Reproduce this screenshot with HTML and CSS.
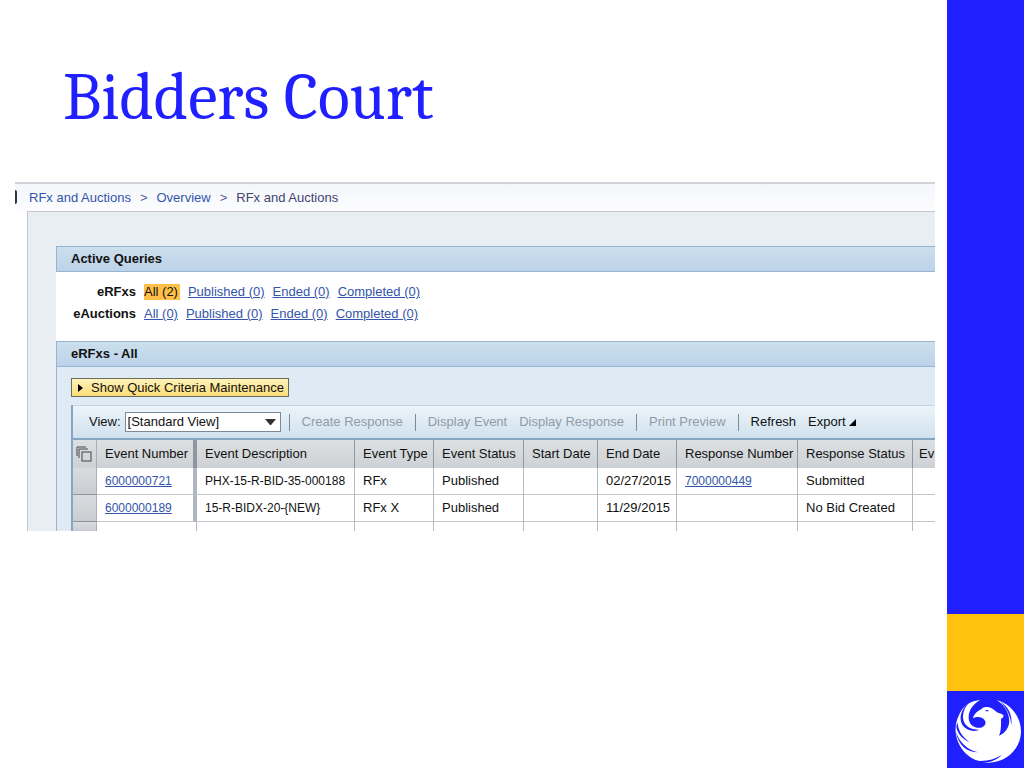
FILE: index.html
```html
<!DOCTYPE html>
<html lang="en">
<head>
    <meta charset="UTF-8">
    <meta name="viewport" content="width=device-width, initial-scale=1.0">
    <title>Bidders Court</title>
    <link rel="stylesheet" href="styles.css">
</head>
<body>
    <main>
        <h1>Bidders Court</h1>

        <div class="portal">
            <!-- breadcrumb -->
            <nav class="crumbs">
                <a href="#">RFx and Auctions</a>
                <span>&gt;</span>
                <a href="#">Overview</a>
                <span>&gt;</span>
                <span class="current">RFx and Auctions</span>
            </nav>

            <div class="workspace">
                <!-- active queries -->
                <section class="queries">
                    <h2>Active Queries</h2>
                    <div class="query-list">
                        <div class="query">
                            <strong>eRFxs</strong>
                            <a class="selected" href="#">All (2)</a>
                            <a href="#">Published (0)</a>
                            <a href="#">Ended (0)</a>
                            <a href="#">Completed (0)</a>
                        </div>
                        <div class="query">
                            <strong>eAuctions</strong>
                            <a href="#">All (0)</a>
                            <a href="#">Published (0)</a>
                            <a href="#">Ended (0)</a>
                            <a href="#">Completed (0)</a>
                        </div>
                    </div>
                </section>

                <!-- result list -->
                <section class="results">
                    <h2>eRFxs - All</h2>
                    <button type="button" class="criteria">
                        <svg width="5" height="8" viewBox="0 0 5 8"><path d="M0 0L5 4L0 8Z"/></svg>
                        Show Quick Criteria Maintenance
                    </button>

                    <div class="grid">
                        <div class="toolbar">
                            <label for="view">View:</label>
                            <div class="select">
                                <select id="view">
                                    <option>[Standard View]</option>
                                </select>
                                <svg width="11" height="6" viewBox="0 0 11 6"><path d="M0 0H11L6 6H5Z"/></svg>
                            </div>
                            <i class="sep"></i>
                            <button type="button" disabled>Create Response</button>
                            <i class="sep"></i>
                            <button type="button" disabled>Display Event</button>
                            <button type="button" disabled>Display Response</button>
                            <i class="sep"></i>
                            <button type="button" disabled>Print Preview</button>
                            <i class="sep"></i>
                            <button type="button">Refresh</button>
                            <button type="button">Export <svg width="7" height="7" viewBox="0 0 7 7"><path d="M7 0V7H0Z"/></svg></button>
                        </div>

                        <table>
                            <colgroup>
                                <col class="c-select">
                                <col class="c-number">
                                <col class="c-description">
                                <col class="c-type">
                                <col class="c-status">
                                <col class="c-start">
                                <col class="c-end">
                                <col class="c-response">
                                <col class="c-response-status">
                                <col>
                            </colgroup>
                            <thead>
                                <tr>
                                    <th class="pick">
                                        <svg width="16" height="16" viewBox="0 0 16 16">
                                            <path d="M1 10V1H10M3 12V3H12"/>
                                            <rect x="6" y="6" width="9" height="9"/>
                                        </svg>
                                    </th>
                                    <th class="fixed">Event Number</th>
                                    <th>Event Description</th>
                                    <th>Event Type</th>
                                    <th>Event Status</th>
                                    <th>Start Date</th>
                                    <th>End Date</th>
                                    <th>Response Number</th>
                                    <th>Response Status</th>
                                    <th>Ev</th>
                                </tr>
                            </thead>
                            <tbody>
                                <tr>
                                    <td class="pick"></td>
                                    <td class="fixed code"><a href="#">6000000721</a></td>
                                    <td class="code">PHX-15-R-BID-35-000188</td>
                                    <td>RFx</td>
                                    <td>Published</td>
                                    <td></td>
                                    <td>02/27/2015</td>
                                    <td class="code"><a href="#">7000000449</a></td>
                                    <td>Submitted</td>
                                    <td></td>
                                </tr>
                                <tr>
                                    <td class="pick"></td>
                                    <td class="fixed code"><a href="#">6000000189</a></td>
                                    <td class="code">15-R-BIDX-20-{NEW}</td>
                                    <td>RFx X</td>
                                    <td>Published</td>
                                    <td></td>
                                    <td>11/29/2015</td>
                                    <td></td>
                                    <td>No Bid Created</td>
                                    <td></td>
                                </tr>
                                <tr class="cut">
                                    <td class="pick"></td>
                                    <td></td>
                                    <td></td>
                                    <td></td>
                                    <td></td>
                                    <td></td>
                                    <td></td>
                                    <td></td>
                                    <td></td>
                                    <td></td>
                                </tr>
                            </tbody>
                        </table>
                    </div>
                </section>
            </div>
        </div>
    </main>

    <!-- side band with the city bird -->
    <aside>
        <div class="gold"></div>
        <div class="logo">
            <svg viewBox="0 0 231 231" role="img" aria-label="City of Phoenix">
                <path class="bird" d="M100 27C72 28 46 46 36 72C26 92 23 114 28 136C38 182 76 214 124 215C178 214 221 174 222 122C222 78 192 38 149 27C176 44 190 72 186 98C182 115 172 127 156 134C163 118 162 102 162 84C163 80 167 84 170 74C165 67 156 68 150 64C142 56 132 49 121 48C111 47 105 50 103 55C90 60 79 72 78 82C88 76 104 76 112 86C120 96 114 107 102 110C84 113 70 104 66 88C61 64 76 39 100 27Z"/>
                <path class="gap" d="M71 31C50 48 42 78 53 97C62 111 78 117 97 116C77 125 55 117 45 100C34 77 46 48 71 31Z"/>
                <path class="gap" d="M32 94C32 116 44 136 67 153C44 144 29 124 28 105Z"/>
                <path class="gap" d="M27 122C38 156 62 176 93 184C60 183 34 164 27 122Z"/>
                <path class="gap" d="M160 33C184 46 197 72 193 103C191 76 181 52 160 33Z"/>
                <path class="gap" d="M80 208C112 213 140 207 164 192C143 214 108 221 80 208Z"/>
                <ellipse class="gap" cx="120" cy="59" rx="5" ry="2"/>
            </svg>
        </div>
    </aside>
</body>
</html>
```

FILE: styles.css
```css
* {
    box-sizing: border-box;
}

body {
    display: flex;
    min-height: 100vh;
    margin: 0;
    background-color: #fff;
    color: #111;
    font-family: Arial, "Liberation Sans", sans-serif;
    font-size: 13px;
    line-height: 16px;
}

main {
    flex: 1;
    min-width: 0;
    padding: 58px 12px 0 15px;
}

h1 {
    margin: 0 0 44px 48px;
    color: #1f1fff;
    font-family: Cambria, "Liberation Serif", serif;
    font-size: 66px;
    font-weight: normal;
    line-height: 80px;
}

h2 {
    height: 26px;
    margin: 0;
    padding: 0 14px;
    border: solid #97b5d0;
    border-width: 1px 0 1px 1px;
    background: linear-gradient(#cbdfec, #bcd2ea);
    font-size: 13px;
    line-height: 24px;
}

a {
    color: #3355aa;
}

button {
    padding: 0;
    border: none;
    background: none;
    color: #111;
    font: inherit;
    white-space: nowrap;
}

button:disabled {
    color: #8f9ba6;
}

.portal {
    overflow: hidden;
}

/* breadcrumb */
.crumbs {
    position: relative;
    display: flex;
    gap: 9px;
    height: 29px;
    padding: 5px 14px;
    border-top: 2px solid #d0d4d8;
    background: linear-gradient(#f3f6fa, #fdfdff);
    color: #5560a0;
    line-height: 17px;
    white-space: nowrap;
}

.crumbs::before {
    content: "";
    position: absolute;
    top: 6px;
    left: 0;
    width: 2px;
    height: 14px;
    border-radius: 0 2px 2px 0;
    background-color: #334;
}

.crumbs a {
    text-decoration: none;
}

.crumbs .current {
    color: #3f4670;
}

.workspace {
    margin-left: 12px;
    padding: 34px 0 0 28px;
    border: solid #c3c8cd;
    border-width: 1px 0 0 1px;
    background-color: #e9eef3;
}

/* active queries */
.queries {
    background-color: #fff;
}

.query-list {
    padding: 9px 0 16px;
}

.query {
    display: flex;
    gap: 8px;
    height: 22px;
    align-items: center;
    white-space: nowrap;
}

.query strong {
    width: 80px;
    text-align: right;
}

.query .selected {
    padding-right: 2px;
    background-color: #ffc04a;
    color: #111;
    text-decoration: none;
}

/* result list */
.results {
    border-left: 1px solid #97b5d0;
    background-color: #deebf5;
}

.results h2 {
    border-left: none;
}

.criteria {
    display: flex;
    gap: 8px;
    align-items: center;
    height: 19px;
    margin: 11px 0 8px 14px;
    padding: 0 4px 0 6px;
    border: 1px solid #6b6b5a;
    background: linear-gradient(#fff3ba, #fbdc78);
}

.grid {
    margin-left: 14px;
    border-left: 2px solid #8ba6c2;
}

.toolbar {
    display: flex;
    align-items: center;
    height: 35px;
    padding-left: 16px;
    border-top: 1px solid #c5d5e3;
    border-bottom: 2px solid #86a5c4;
    background: linear-gradient(#ecf4fa, #d0e1ee);
}

.toolbar button {
    margin-right: 12px;
}

.select {
    position: relative;
    width: 156px;
    height: 20px;
    margin: 0 8px 0 4px;
}

.select select {
    width: 100%;
    height: 100%;
    padding: 0 2px;
    border: 1px solid #7d8a96;
    border-radius: 0;
    background-color: #fff;
    color: #111;
    font: inherit;
    appearance: none;
}

.select svg {
    position: absolute;
    top: 7px;
    right: 5px;
    fill: #333;
}

.sep {
    width: 1px;
    height: 17px;
    margin-right: 12px;
    background-color: #7c8a98;
}

table {
    width: 100%;
    border-collapse: separate;
    border-spacing: 0;
    table-layout: fixed;
    background-color: #fff;
}

.c-select { width: 24px; }
.c-number { width: 100px; }
.c-description { width: 158px; }
.c-type { width: 79px; }
.c-status { width: 90px; }
.c-start { width: 74px; }
.c-end { width: 79px; }
.c-response { width: 121px; }
.c-response-status { width: 115px; }

th,
td {
    height: 27px;
    padding: 0 0 0 8px;
    overflow: hidden;
    border-right: 1px solid #b4bac0;
    border-bottom: 1px solid #c3c7cd;
    text-align: left;
    white-space: nowrap;
}

th {
    height: 28px;
    border-right-color: #8f99a3;
    border-bottom: none;
    background: linear-gradient(#dde0e3, #cdd1d5);
    font-weight: normal;
}

th:last-child,
td:last-child {
    padding-left: 6px;
    border-right: none;
}

.fixed {
    border-right: 4px solid #b0b6c2;
}

th.fixed {
    border-right-color: #8f969f;
}

.code {
    font-size: 12px;
}

.pick {
    padding: 0 0 0 3px;
    border-right: 1px solid #a9afb5;
}

td.pick {
    border-bottom-color: #8f959b;
    background: linear-gradient(#d9dcdf, #c9cdd1);
}

.pick svg {
    display: block;
    fill: none;
    stroke: #444;
}

.cut td {
    height: 9px;
    border-bottom: none;
}

/* side band */
aside {
    display: flex;
    flex-direction: column;
    justify-content: flex-end;
    width: 77px;
    background-color: #1f1fff;
}

.gold {
    height: 77px;
    background-color: #ffc30d;
}

.logo svg {
    display: block;
    width: 100%;
}

.bird {
    fill: #fff;
}

.gap {
    fill: #1f1fff;
}
```
